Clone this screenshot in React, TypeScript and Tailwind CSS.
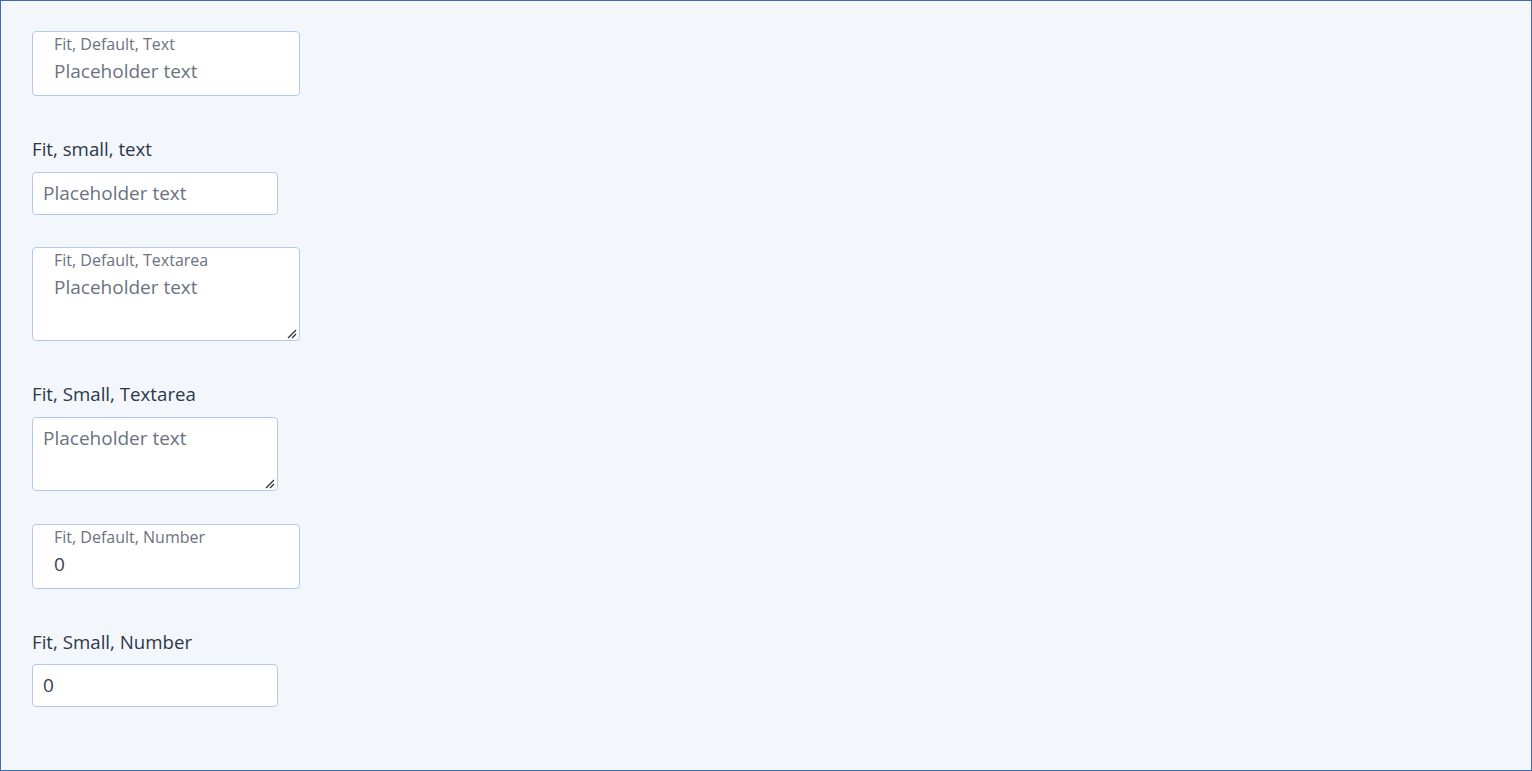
import React from "react";

const font = { fontFamily: '"Open Sans", "Noto Sans", sans-serif' };

export default function App() {
  return (
    <div
      className="w-[1532px] h-[771px] border border-[#3b6db3] bg-[#f3f7fc] pt-[30px] pl-[31px] flex flex-col gap-8"
      style={font}
    >
      {/* Fit, Default, Text */}
      <div className="w-[268px] h-[65px] rounded-[4px] border border-[#b3c9ea] bg-white flex flex-col pl-[21px] pt-[2px]">
        <label className="text-[16px] leading-[20px] text-[#6b7280]">Fit, Default, Text</label>
        <input
          type="text"
          placeholder="Placeholder text"
          className="w-full outline-none bg-transparent text-[19px] leading-[28px] mt-[3px] text-[#374151] placeholder:text-[#6b7280]"
        />
      </div>

      {/* Fit, small, text */}
      <div className="flex flex-col">
        <label className="pt-[9px] text-[18.7px] leading-[24px] text-[#2d3748] mb-[11px]">Fit, small, text</label>
        <input
          type="text"
          placeholder="Placeholder text"
          className="w-[246px] h-[43px] rounded-[4px] border border-[#b3c9ea] bg-white px-[10px] pb-[2px] outline-none text-[19px] text-[#374151] placeholder:text-[#6b7280]"
        />
      </div>

      {/* Fit, Default, Textarea */}
      <div className="relative w-[268px] h-[94px] rounded-[4px] border border-[#b3c9ea] bg-white flex flex-col pt-[2px] overflow-hidden">
        <label className="pl-[21px] text-[16px] leading-[20px] text-[#6b7280]">Fit, Default, Textarea</label>
        <textarea
          placeholder="Placeholder text"
          className="flex-1 w-full outline-none bg-transparent pl-[21px] pt-[3px] text-[19px] leading-[28px] text-[#374151] placeholder:text-[#6b7280] resize-none"
        />
        <ResizeGrip />
      </div>

      {/* Fit, Small, Textarea */}
      <div className="flex flex-col">
        <label className="pt-[9px] text-[18.7px] leading-[24px] text-[#2d3748] mb-[11px]">Fit, Small, Textarea</label>
        <div className="relative w-[246px] h-[74px] rounded-[4px] border border-[#b3c9ea] bg-white overflow-hidden">
          <textarea
            placeholder="Placeholder text"
            className="w-full h-full outline-none bg-transparent px-[10px] pt-[6px] text-[19px] leading-[28px] text-[#374151] placeholder:text-[#6b7280] resize-none"
          />
          <ResizeGrip />
        </div>
      </div>

      {/* Fit, Default, Number */}
      <div className="mt-[1px] w-[268px] h-[65px] rounded-[4px] border border-[#b3c9ea] bg-white flex flex-col pl-[21px] pt-[2px]">
        <label className="text-[16px] leading-[20px] text-[#6b7280]">Fit, Default, Number</label>
        <input
          type="text"
          defaultValue="0"
          className="w-full outline-none bg-transparent text-[19px] leading-[28px] mt-[3px] text-[#374151]"
        />
      </div>

      {/* Fit, Small, Number */}
      <div className="flex flex-col">
        <label className="pt-[9px] text-[18.7px] leading-[24px] text-[#2d3748] mb-[10px]">Fit, Small, Number</label>
        <input
          type="text"
          defaultValue="0"
          className="w-[246px] h-[43px] rounded-[4px] border border-[#b3c9ea] bg-white px-[10px] pb-[2px] outline-none text-[19px] text-[#374151]"
        />
      </div>
    </div>
  );
}

function ResizeGrip() {
  return (
    <svg
      className="absolute right-[1px] bottom-[1px] pointer-events-none"
      width="12"
      height="12"
      viewBox="0 0 12 12"
    >
      <line x1="2" y1="11" x2="10" y2="3" stroke="#333" strokeWidth="1.3" />
      <line x1="6" y1="11" x2="10" y2="7" stroke="#333" strokeWidth="1.3" />
    </svg>
  );
}
